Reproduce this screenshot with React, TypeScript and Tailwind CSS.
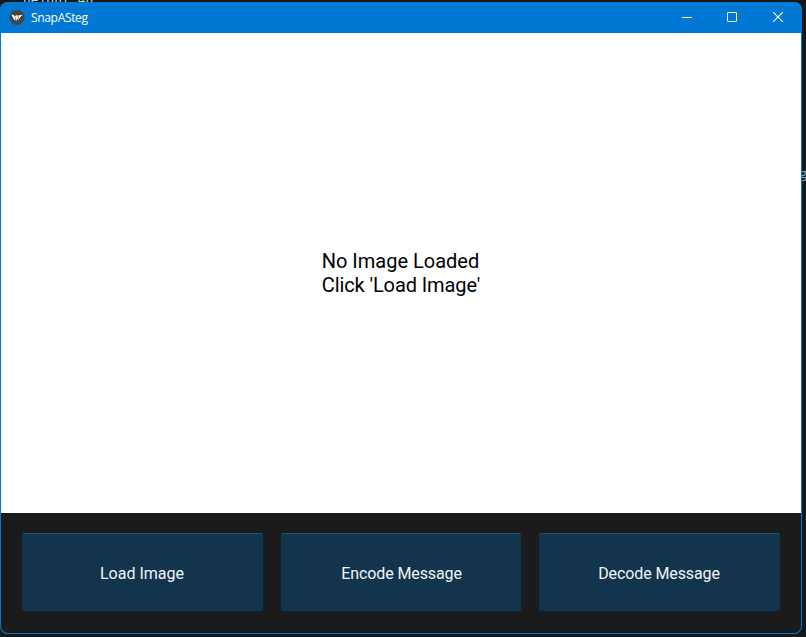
function TitleBar() {
  return (
    <header className="flex h-[31px] shrink-0 items-center bg-[#0078d4] text-white">
      <svg className="ml-[9px] h-4 w-4" viewBox="0 0 16 16">
        <circle cx="8" cy="7.5" r="7.5" fill="#424547" />
        <path d="M2.4 4.6 5.4 5.6 6.5 10.6 5 9.8Z" fill="#fff" />
        <path d="M6 6.2 8.1 4.8 9.6 8 7 10.8Z" fill="#f0f0f0" />
        <path d="M9 5.6 13.8 4.8 11.8 6.6 8.8 10.7 9.8 7.7Z" fill="#fff" />
      </svg>
      <h1 className="ml-1.5 w-[60px] whitespace-nowrap pt-px font-['Open_Sans','Noto_Sans',sans-serif] text-[12px] font-medium leading-4 tracking-[-0.33px]">SnapASteg</h1>
      <div className="ml-auto mr-px flex h-full">
        <button aria-label="Minimize" className="flex w-[45px] items-center justify-center">
          <svg width="10" height="11" viewBox="0 0 10 11" shapeRendering="crispEdges"><path d="M0 5.5h10" stroke="white" /></svg>
        </button>
        <button aria-label="Maximize" className="flex w-[46px] items-center justify-center pb-px">
          <svg width="10" height="10" viewBox="0 0 10 10"><rect x=".5" y=".5" width="9" height="9" rx=".5" fill="none" stroke="white" /></svg>
        </button>
        <button aria-label="Close" className="flex w-[46px] items-center justify-center pb-px">
          <svg width="10" height="10" viewBox="0 0 10 10"><path d="M.2.2 9.8 9.8M9.8.2.2 9.8" stroke="white" strokeWidth="1.1" /></svg>
        </button>
      </div>
    </header>
  );
}

function ActionButton({ label, className }: { label: string; className: string }) {
  return (
    <button className={`h-[78px] rounded-[2px] border-t border-[#1d5379] bg-[#12344d] pt-0.5 text-[16px] text-[#f2f4f6] shadow-[0_1px_1px_#14232e] ${className}`}>
      {label}
    </button>
  );
}

export default function App() {
  return (
    <div className="relative h-[637px] w-[806px] overflow-hidden bg-[#181818] font-['Roboto',sans-serif]">
      <div className="absolute -top-[8px] left-[23px] whitespace-pre font-['DejaVu_Sans_Mono',monospace] text-[13px] leading-4 text-[#9cdcfe]">
        height <span className="text-[#b5cea8]">40</span>
      </div>
      <span className="absolute left-[800px] top-[165px] font-['Open_Sans',sans-serif] text-[13px] leading-4 text-[#7ebcda]">g</span>
      <div className="relative pt-0.5">
        <div className="flex h-[632px] w-[802px] flex-col overflow-hidden rounded-[8px] bg-[#0078d4]">
          <TitleBar />
          <div className="mx-px mb-px flex min-h-0 flex-1 flex-col overflow-hidden rounded-b-[7px] bg-[#1b1b1b]">
            <main className="flex h-[480px] shrink-0 items-center justify-center bg-white text-[20px] leading-6 text-black">
              <p>
                No Image Loaded<br />
                <span className="tracking-[-0.09px]">Click 'Load Image'</span>
              </p>
            </main>
            <footer className="flex gap-[18px] px-[21px] pt-5">
              <ActionButton label="Load Image" className="w-[241px] pr-px" />
              <ActionButton label="Encode Message" className="w-[240px] pl-px tracking-[-0.1px]" />
              <ActionButton label="Decode Message" className="w-[241px] pr-px tracking-[-0.1px]" />
            </footer>
          </div>
        </div>
      </div>
    </div>
  );
}
